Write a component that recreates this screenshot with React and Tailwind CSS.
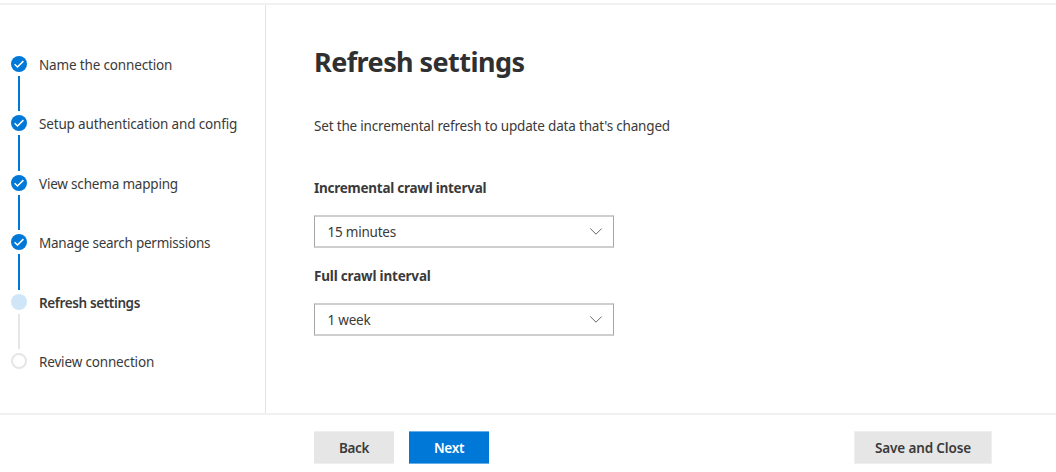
const steps = [
  { label: "Name the connection", state: "done", tracking: "tracking-[-0.16px]" },
  { label: "Setup authentication and config", state: "done", tracking: "tracking-[-0.16px]" },
  { label: "View schema mapping", state: "done", tracking: "tracking-[-0.19px]" },
  { label: "Manage search permissions", state: "done", tracking: "tracking-[-0.25px]" },
  { label: "Refresh settings", state: "current", tracking: "tracking-[-0.37px]" },
  { label: "Review connection", state: "todo", tracking: "tracking-[-0.16px]" },
];

function Marker({ state }) {
  if (state === "done") {
    return (
      <svg viewBox="0 0 16 16" className="block size-4 shrink-0">
        <circle cx="8" cy="8" r="8" fill="#0078d7" />
        <path d="M3.6 8.2 6.5 11 12.4 5.1" fill="none" stroke="#fff" strokeWidth="1.5" />
      </svg>
    );
  }
  if (state === "current") return <span className="block size-4 shrink-0 rounded-full bg-[#cfe6f8]" />;
  return <span className="block size-4 shrink-0 rounded-full border-2 border-[#e6e6e6]" />;
}

function Step({ step, last }) {
  return (
    <li className={last ? "flex h-4" : "flex h-[59.5px]"}>
      <div className="flex w-4 flex-col items-center">
        <Marker state={step.state} />
        {!last && (
          <span className={step.state === "done" ? "my-1 w-0.5 flex-1 bg-[#0078d7]" : "my-1 w-0.5 flex-1 bg-[#e6e6e6]"} />
        )}
      </div>
      <span
        className={`ml-3 h-5 whitespace-nowrap pt-[0.9px] text-[13.5px] leading-4 ${step.tracking} ${
          step.state === "current" ? "font-semibold" : ""
        }`}
      >
        {step.label}
      </span>
    </li>
  );
}

function Select({ value }) {
  return (
    <button className="flex h-[33px] w-[300px] items-center justify-between border-x border-y-2 border-x-[#a6a6a6] border-y-[#cfcfcf] bg-white pl-[12.5px] pr-[11px] text-[13.5px] leading-5 tracking-[-0.22px]">
      <span>{value}</span>
      <svg viewBox="0 0 12 7" className="h-[7px] w-3" fill="none" stroke="#555" strokeWidth="0.9">
        <path d="M.3.5 6 6.2 11.7.5" />
      </svg>
    </button>
  );
}

export default function App() {
  return (
    <div className="flex h-[472px] w-[1056px] flex-col overflow-hidden bg-white pt-[3px] font-['Noto_Sans','Open_Sans',sans-serif] text-[#3a3a3a]">
      <div className="flex h-[412px] border-y-2 border-[#f1f1f1]">
        <nav className="w-[266px] border-r border-[#e3e3e3] pl-[11px] pt-[50.9px]">
          <ol>
            {steps.map((s, i) => (
              <Step key={s.label} step={s} last={i === steps.length - 1} />
            ))}
          </ol>
        </nav>
        <main className="flex flex-col items-start pl-12 pt-[37px]">
          <h1 className="h-10 text-[27px] font-bold leading-10 tracking-[-0.56px] text-[#303030]">Refresh settings</h1>
          <p className="mt-[34px] h-5 text-[13.5px] leading-5 tracking-[-0.18px]">
            Set the incremental refresh to update data that's changed
          </p>
          <h2 className="mb-[17px] mt-[42px] h-5 text-[13.5px] font-bold leading-5 tracking-[-0.25px]">Incremental crawl interval</h2>
          <Select value="15 minutes" />
          <h2 className="mb-[17px] mt-[18px] h-5 text-[13.5px] font-bold leading-5 tracking-[-0.19px]">Full crawl interval</h2>
          <Select value="1 week" />
        </main>
      </div>
      <footer className="flex pl-[314px] pr-[64px] pt-4 text-[13.5px] font-semibold">
        <button className="mr-[15px] h-[33px] w-20 border-y border-y-[#efefef] bg-[#e6e6e6] bg-clip-padding pt-[2px] tracking-[-0.35px]">Back</button>
        <button className="h-[33px] w-20 border-y border-y-[#66aee7] bg-[#0078d7] pt-[2px] tracking-[-0.3px] text-white">Next</button>
        <button className="ml-auto h-[33px] w-[138px] border border-[#efefef] bg-[#e6e6e6] bg-clip-padding pt-[2px] tracking-[-0.15px]">
          Save and Close
        </button>
      </footer>
    </div>
  );
}
